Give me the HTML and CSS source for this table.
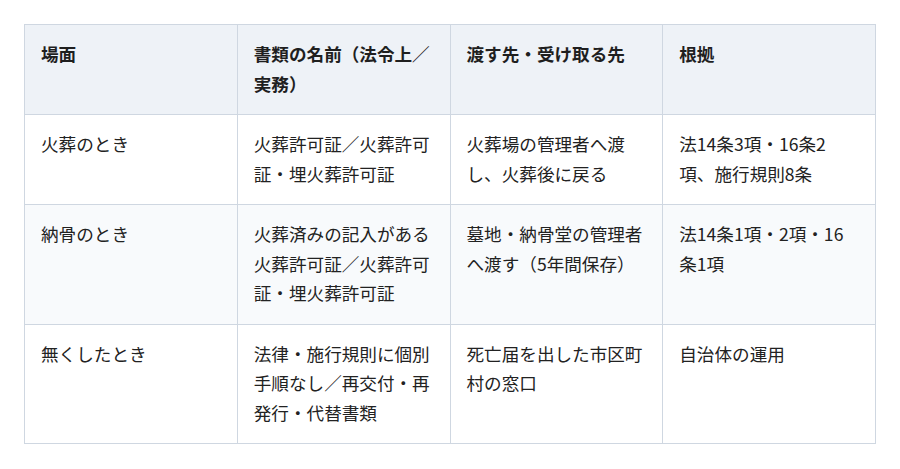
FILE: index.html
```html
<!DOCTYPE html>
<html lang="ja">
<head>
<meta charset="utf-8">
<link rel="stylesheet" href="styles.css">
</head>
<body>
<table class="docs">
  <thead>
    <tr>
      <th>場面</th>
      <th>書類の名前（法令上／実務）</th>
      <th>渡す先・受け取る先</th>
      <th>根拠</th>
    </tr>
  </thead>
  <tbody>
    <tr>
      <td>火葬のとき</td>
      <td>火葬許可証／火葬許可証・埋火葬許可証</td>
      <td>火葬場の管理者へ渡し、火葬後に戻る</td>
      <td>法14条3項・16条2項、施行規則8条</td>
    </tr>
    <tr>
      <td>納骨のとき</td>
      <td>火葬済みの記入がある火葬許可証／火葬許可証・埋火葬許可証</td>
      <td>墓地・納骨堂の管理者へ渡す（5年間保存）</td>
      <td>法14条1項・2項・16条1項</td>
    </tr>
    <tr>
      <td>無くしたとき</td>
      <td>法律・施行規則に個別手順なし／再交付・再発行・代替書類</td>
      <td>死亡届を出した市区町村の窓口</td>
      <td>自治体の運用</td>
    </tr>
  </tbody>
</table>
</body>
</html>
```

FILE: styles.css
```css
html, body {
  margin: 0;
  padding: 0;
  background: #ffffff;
}
body {
  padding: 24px;
  font-family: "Noto Sans CJK JP", "Noto Sans", sans-serif;
  color: #222222;
}
.docs {
  width: 852px;
  border-collapse: collapse;
  table-layout: fixed;
  font-size: 17.6px;
  line-height: 29.5px;
}
.docs th,
.docs td {
  border: 1px solid #cfd7e1;
  padding: 14px 16px 16px;
  text-align: left;
  vertical-align: top;
  word-break: break-all;
}
.docs th {
  background: #eef2f7;
  font-weight: 700;
  color: #1f1f1f;
}
.docs tbody tr:nth-child(2) td {
  background: #f8fafc;
}
```
